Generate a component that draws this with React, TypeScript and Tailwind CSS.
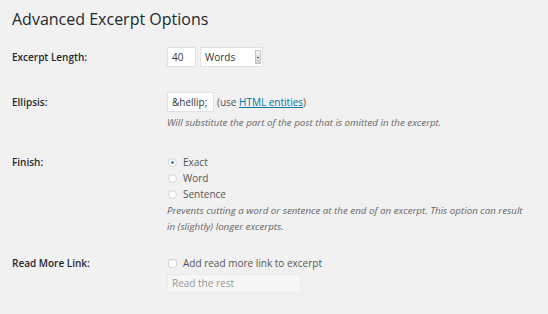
import React from "react";

const Row = ({ label, labelClass = "leading-[20px]", className = "", children }: { label: string; labelClass?: string; className?: string; children: React.ReactNode }) => (
  <div className={`flex items-start ${className}`}>
    <div className={`w-[155px] shrink-0 text-[10px] font-semibold text-[#23282d] ${labelClass}`}>{label}</div>
    <div className="flex-1">{children}</div>
  </div>
);

const Radio = ({ checked, label }: { checked?: boolean; label: string }) => (
  <label className="flex items-center h-[16px]">
    <span className="ml-[1px] w-[9px] h-[9px] rounded-full border border-[#d4d4d4] bg-white flex items-center justify-center shadow-[inset_0_1px_1px_rgba(0,0,0,0.06)]">
      {checked && <span className="w-[3px] h-[3px] rounded-full bg-[#1e8cbe]" />}
    </span>
    <span className="ml-[6px] text-[10px] text-[#555]">{label}</span>
  </label>
);

export default function App() {
  return (
    <div className="w-[548px] h-[314px] bg-[#f1f1f1] font-['Open_Sans',sans-serif] text-[#444] overflow-hidden">
      <div className="pl-[12px] pt-[7px]">
        <h2 className="text-[16px] leading-[24px] text-[#23282d]">Advanced Excerpt Options</h2>

        <Row label="Excerpt Length:" className="mt-[16px]">
          <div className="flex items-center gap-[4px]">
            <div className="w-[29px] h-[20px] bg-white border border-[#e2e2e2] text-[10px] text-[#333] leading-[18px] pl-[4px]">40</div>
            <div className="w-[63px] h-[20px] bg-white border border-[#e2e2e2] text-[10px] text-[#333] leading-[18px] pl-[4px] flex items-center justify-between pr-[1px]">
              <span>Words</span>
              <span className="w-[6px] h-[14px] bg-gradient-to-b from-[#f4f4f4] to-[#cfcfcf] border border-[#c4c4c4] flex items-center justify-center">
                <span className="w-[2px] h-[1px] bg-[#555]" />
              </span>
            </div>
          </div>
        </Row>

        <Row label="Ellipsis:" className="mt-[25px]">
          <div className="flex items-center">
            <div className="w-[47px] h-[20px] bg-white border border-[#e2e2e2] text-[10px] text-[#333] leading-[18px] pl-[4px]">&amp;hellip;</div>
            <span className="ml-[3px] text-[10px] text-[#555]">
              (use <span className="text-[#0073aa] underline">HTML entities</span>)
            </span>
          </div>
          <p className="mt-[3px] text-[9.75px] leading-[16px] italic text-[#666]">
            Will substitute the part of the post that is omitted in the excerpt.
          </p>
        </Row>

        <Row label="Finish:" labelClass="leading-[16px]" className="mt-[23px]">
          <Radio checked label="Exact" />
          <Radio label="Word" />
          <Radio label="Sentence" />
          <p className="mt-[1px] w-[356px] text-[9.75px] leading-[16px] italic text-[#666]">
            Prevents cutting a word or sentence at the end of an excerpt. This option can result in (slightly) longer excerpts.
          </p>
        </Row>

        <Row label="Read More Link:" labelClass="leading-[20px]" className="mt-[18px]">
          <label className="flex items-center h-[20px]">
            <span className="ml-[1px] w-[9px] h-[9px] rounded-[3px] border border-[#d4d4d4] bg-white shadow-[inset_0_1px_1px_rgba(0,0,0,0.06)]" />
            <span className="ml-[6px] text-[10px] text-[#555]">Add read more link to excerpt</span>
          </label>
          <div className="mt-[1px] w-[134px] h-[19px] bg-[#f6f6f6] border border-[#ebebeb] text-[10px] text-[#999] leading-[17px] pl-[4px]">
            Read the rest
          </div>
        </Row>
      </div>
    </div>
  );
}
